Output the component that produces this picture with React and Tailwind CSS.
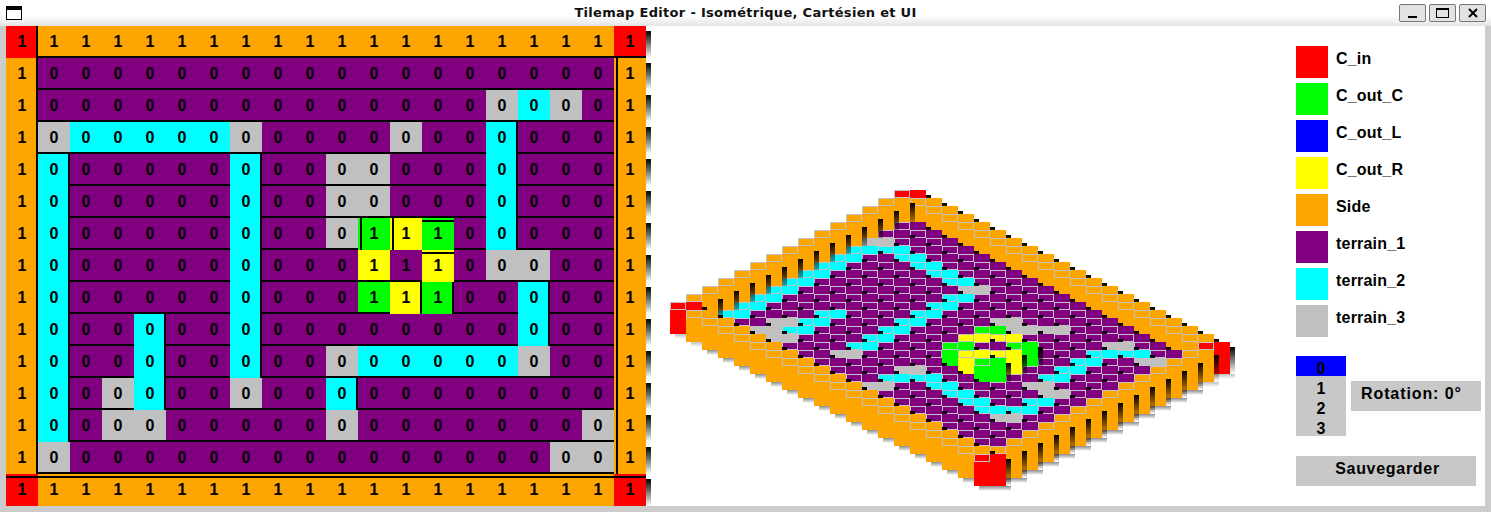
const SRC = [
  '11111111111111111111',
  '10000000000000000001',
  '10000000000000000001',
  '10000000000000000001',
  '10000000000000000001',
  '10000000000000000001',
  '10000000000111000001',
  '10000000000111000001',
  '10000000000111000001',
  '10000000000000000001',
  '10000000000000000001',
  '10000000000000000001',
  '10000000000000000001',
  '10000000000000000001',
  '11111111111111111111',
];

// tile types: s side, r corner, p terrain_1, c terrain_2, g terrain_3, G green, Y yellow
const TYPES = [
  'rssssssssssssssssssr',
  'sppppppppppppppppppS',
  'sppppppppppppppgcgpS',
  'sgcccccgppppgppcpppS',
  'scpppppcppggpppcpppS',
  'scpppppcppggpppcpppS',
  'scpppppcppgGYGpcpppS',
  'scpppppcpppYpYpggppS',
  'scpppppcpppGYGppcppS',
  'scppcppcppppppppcppS',
  'scppcppcppgcccccgppS',
  'scpgcppgppcppppppppS',
  'scpggpppppgpppppppgS',
  'sgpppppppppppppppggS',
  'rssssssssssssssssssr',
];

const COLORS = {
  s: 'bg-[#ffa500]',
  S: 'bg-[#ffa500]',
  r: 'bg-[#ff0000]',
  p: 'bg-[#800080]',
  c: 'bg-[#00ffff]',
  g: 'bg-[#c0c0c0]',
  G: 'bg-[#00ff00]',
  Y: 'bg-[#ffff00]',
};
const FILL = {
  s: '#ffa500',
  S: '#ffa500',
  r: '#ff0000',
  p: '#800080',
  c: '#00ffff',
  g: '#c0c0c0',
  G: '#00ff00',
  Y: '#ffff00',
};

const edgeOf = (r, c, t) => {
  if (r === 14) return 'top2';
  if (r === 0) return c === 0 ? 'right' : 'bottom';
  if (c === 0) return 'right';
  if (c === 19) return 'left2';
  if (t === 'c' && TYPES[r - 1][c] !== 'p' && TYPES[r + 1][c] !== 'p') return 'right';
  if (t === 'c' && TYPES[r][c - 1] === 'p' && TYPES[r][c + 1] === 'p') return 'right';
  if (t === 'G' && r === 6 && c === 11) return 'left2';
  if (t === 'Y' && r === 6) return 'left2';
  if (t === 'G' && r === 6) return 'top2';
  if (t === 'Y' && r === 7 && c === 13) return 'top2';
  if (r === 8 && c === 12) return 'right';
  if (r === 8 && c === 13) return 'right';
  return 'bottom';
};

const Line = ({ edge }) => {
  if (edge === 'right') return <span className="absolute top-0 bottom-0 right-0 w-[2px] bg-black" />;
  if (edge === 'bottom') return <span className="absolute left-0 right-0 bottom-0 h-[2px] bg-black" />;
  if (edge === 'left2') return <span className="absolute top-0 bottom-0 left-[2px] w-[2px] bg-black" />;
  return <span className="absolute left-0 right-0 top-[2px] h-[2px] bg-black" />;
};

const Cell = ({ r, c }) => {
  const t = TYPES[r][c];
  return (
    <div className={`relative w-8 h-8 flex items-center justify-center ${COLORS[t]}`}>
      <Line edge={edgeOf(r, c, t)} />
      <span className="relative text-[16px] font-bold text-black leading-none">{SRC[r][c]}</span>
    </div>
  );
};

const Tile = ({ r, c }) => {
  const t = TYPES[r][c];
  const x = 894 + (c - r) * 16;
  const y = 190 + (c + r) * 8 + (SRC[r][c] === '1' ? 0 : 16);
  return (
    <g>
      <rect x={x} y={y} width="32" height="32" fill={FILL[t]} />
      <rect x={x + 0.5} y={y + 0.5} width="15" height="7" fill="none" stroke="#c4c4c4" />
      <rect x={x + 32} y={y + 5} width="5" height="27" fill="url(#side)" />
      <rect x={x + 5} y={y + 32} width="32" height="5" fill="url(#under)" />
    </g>
  );
};

const IsoMap = () => (
  <svg width="629" height="480" viewBox="651 26 629 480" shapeRendering="crispEdges">
    <defs>
      <linearGradient id="side" x1="0" y1="0" x2="0" y2="1">
        <stop offset="0" stopColor="#000" stopOpacity="1" />
        <stop offset="1" stopColor="#000" stopOpacity="0" />
      </linearGradient>
      <linearGradient id="under" x1="0" y1="0" x2="0" y2="1">
        <stop offset="0" stopColor="#000" stopOpacity="0.25" />
        <stop offset="1" stopColor="#000" stopOpacity="0" />
      </linearGradient>
    </defs>
    {TYPES.map((row, r) => [...row].map((_, c) => <Tile key={`${r}-${c}`} r={r} c={c} />))}
  </svg>
);

const LEGEND = [
  ['C_in', 'bg-[#ff0000]'],
  ['C_out_C', 'bg-[#00ff00]'],
  ['C_out_L', 'bg-[#0000ff]'],
  ['C_out_R', 'bg-[#ffff00]'],
  ['Side', 'bg-[#ffa500]'],
  ['terrain_1', 'bg-[#800080]'],
  ['terrain_2', 'bg-[#00ffff]'],
  ['terrain_3', 'bg-[#c0c0c0]'],
];

const SidePanel = () => (
  <div className="w-[205px] pl-4 pt-5 flex flex-col text-black font-['Liberation_Sans',sans-serif] font-bold">
    <div className="flex flex-col gap-[5px]">
      {LEGEND.map(([name, bg]) => (
        <div key={name} className="flex items-center gap-2 h-8">
          <span className={`w-8 h-8 ${bg}`} />
          <span className="text-[16px] tracking-[0.2px] pb-[7px] leading-[25px]">{name}</span>
        </div>
      ))}
    </div>
    <div className="flex items-center gap-[5px] mt-[19px]">
      <div className="w-[50px] flex flex-col bg-[#c8c8c8] text-[16px] text-center">
        <span className="h-5 leading-[25px] bg-[#0000ff]">0</span>
        <span className="h-5 leading-[25px]">1</span>
        <span className="h-5 leading-[25px]">2</span>
        <span className="h-5 leading-[25px]">3</span>
      </div>
      <div className="w-[130px] h-[30px] bg-[#c8c8c8] pl-[10px] text-[16px] tracking-[0.9px] leading-[26px]">Rotation: 0°</div>
    </div>
    <div className="w-[180px] h-[30px] mt-5 pl-[3px] bg-[#c8c8c8] text-center text-[16px] tracking-[0.7px] leading-[26px]">Sauvegarder</div>
  </div>
);

const TitleBar = () => (
  <div className="relative h-[26px] flex items-center justify-center pb-[1px] bg-gradient-to-b from-white from-60% to-[#e4e4e4]">
    <div className="absolute left-[6px] top-[6px] w-4 h-[14px] border border-black border-t-[4px] bg-white" />
    <span className="text-[13px] font-bold tracking-[0.3px] text-[#111] font-['DejaVu_Sans',sans-serif]">
      Tilemap Editor - Isométrique, Cartésien et UI
    </span>
    <div className="absolute right-[5px] top-1 flex gap-[3px]">
      <div className="w-[27px] h-[18px] rounded-[2px] border border-[#777] bg-[#e2e2e2] flex items-end justify-center pb-[3px]">
        <span className="w-[9px] h-[2px] bg-black" />
      </div>
      <div className="w-[27px] h-[18px] rounded-[2px] border border-[#777] bg-[#e2e2e2] flex items-center justify-center">
        <span className="w-[13px] h-[10px] border border-black border-t-[2px]" />
      </div>
      <div className="w-[27px] h-[18px] rounded-[2px] border border-[#777] bg-[#e2e2e2] flex items-center justify-center">
        <svg width="10" height="10" viewBox="0 0 10 10">
          <path d="M1 1 L9 9 M9 1 L1 9" stroke="#000" strokeWidth="2" fill="none" />
        </svg>
      </div>
    </div>
  </div>
);

export default function App() {
  return (
    <div className="w-[1491px] h-[512px] overflow-hidden bg-[#cccccc] font-['Liberation_Sans',sans-serif]">
      <TitleBar />
      <div className="flex h-[480px] ml-[6px] w-[1479px] bg-white">
        <div className="w-[640px] grid grid-cols-[repeat(20,32px)] grid-rows-[repeat(15,32px)]">
          {TYPES.map((row, r) => [...row].map((_, c) => <Cell key={`${r}-${c}`} r={r} c={c} />))}
        </div>
        <div className="w-[5px] h-full bg-[linear-gradient(to_bottom,#fff_0,#fff_5px,#000_5px,#fff_32px)] bg-[length:5px_32px]" />
        <IsoMap />
        <SidePanel />
      </div>
    </div>
  );
}
